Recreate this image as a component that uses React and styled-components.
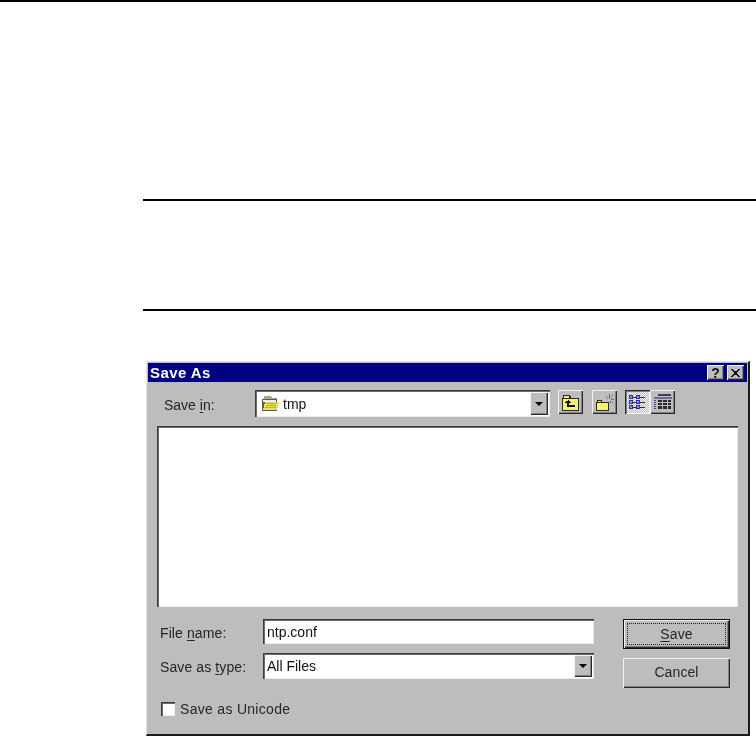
import React from 'react';
import styled, { createGlobalStyle, css } from 'styled-components';

const GlobalStyle = createGlobalStyle`
  html, body {
    margin: 0;
    padding: 0;
    background: #fff;
    overflow: hidden;
  }
`;

const Page = styled.div`
  width: 756px;
  height: 736px;
  overflow: hidden;
  display: flex;
  flex-direction: column;
  background: #fff;
`;

const TopRule = styled.div`
  height: 2px;
  background: #000;
  flex: none;
`;

const NoteBlock = styled.div`
  flex: none;
  height: 108px;
  margin: 197px 0 0 143px;
  border-top: 2px solid #000;
  border-bottom: 2px solid #000;
`;

const Dialog = styled.div`
  flex: none;
  box-sizing: border-box;
  width: 604px;
  height: 375px;
  margin: 50px 0 0 146px;
  padding: 1px;
  background: #bebcbe;
  border-top: 1px solid #e4e4e4;
  border-left: 1px solid #e4e4e4;
  border-right: 2px solid #1c1c1c;
  border-bottom: 2px solid #1c1c1c;
  font-family: "Liberation Sans", Arial, sans-serif;
  font-size: 14px;
  color: #262626;
  display: flex;
  flex-direction: column;
  filter: blur(0.35px);
`;

const TitleBar = styled.div`
  flex: none;
  height: 19px;
  background: #000080;
  display: flex;
  align-items: center;
  justify-content: space-between;
  padding: 0 3px 0 2px;
`;

const TitleText = styled.span`
  color: #fff;
  font-weight: 700;
  font-size: 15px;
  letter-spacing: 0.4px;
`;

const TitleButtons = styled.div`
  display: flex;
  gap: 3px;
`;

const raised = css`
  background: #bebcbe;
  box-shadow: inset 1px 1px #f2f2f2, inset -1px -1px #2a2a2a, inset -2px -2px #808080;
`;

const sunken = css`
  box-shadow: inset 1px 1px #3a3a3a, inset 2px 2px #6c6c6c, inset -1px -1px #ececec;
`;

const TitleButton = styled.div`
  ${raised}
  width: 17px;
  height: 15px;
  display: flex;
  align-items: center;
  justify-content: center;
  font-size: 14px;
  font-weight: 700;
  color: #111;
  line-height: 1;
`;

const Body = styled.div`
  flex: 1;
  display: flex;
  flex-direction: column;
  padding: 8px 9px 0 9px;
`;

const LookInRow = styled.div`
  height: 27px;
  display: flex;
  align-items: center;
  padding-left: 7px;
`;

const LookInLabel = styled.span`
  width: 91px;
  flex: none;
  padding-top: 2px;
`;

const Underlined = styled.span`
  text-decoration: underline;
  text-underline-offset: 2px;
`;

const Combo = styled.div`
  ${sunken}
  box-sizing: border-box;
  background: #fff;
  display: flex;
  align-items: center;
  width: ${p => p.$width}px;
  height: ${p => p.$height}px;
  padding: 2px 2px 2px 4px;
  flex: none;
`;

const ComboValue = styled.span`
  flex: 1;
  display: flex;
  align-items: center;
  gap: 4px;
  color: #111;
`;

const PathCombo = styled(Combo)`
  padding-left: 7px;
`;

const ArrowButton = styled.div`
  ${raised}
  align-self: stretch;
  width: 18px;
  display: flex;
  align-items: center;
  justify-content: center;
`;

const ArrowDown = styled.span`
  width: 0;
  height: 0;
  border-left: 4px solid transparent;
  border-right: 4px solid transparent;
  border-top: 4px solid #000;
`;

const Tools = styled.div`
  display: flex;
  align-items: flex-start;
  align-self: flex-start;
  margin-left: 8px;
`;

const ToolButton = styled.div`
  ${raised}
  width: 25px;
  height: 24px;
  display: flex;
  align-items: center;
  justify-content: center;
  margin-left: ${p => p.$gap || 0}px;
  ${p => p.$pressed && css`
    background: repeating-conic-gradient(#f2f2f2 0 25%, #bebcbe 0 50%) 0 0 / 2px 2px;
    box-shadow: inset 1px 1px #2a2a2a, inset 2px 2px #808080, inset -1px -1px #f2f2f2;
  `}
`;

const FileList = styled.div`
  ${sunken}
  flex: none;
  height: 181px;
  margin-top: 9px;
  background: #fff;
`;

const FormArea = styled.div`
  display: flex;
  margin: 12px 0 0 3px;
`;

const Fields = styled.div`
  display: flex;
  flex-direction: column;
  gap: 9px;
`;

const FieldRow = styled.div`
  display: flex;
  align-items: center;
`;

const FieldLabel = styled.span`
  width: 103px;
  flex: none;
  letter-spacing: 0.1px;
  padding-top: 2px;
`;

const Actions = styled.div`
  display: flex;
  flex-direction: column;
  gap: 9px;
  margin-left: 29px;
`;

const ActionButton = styled.div`
  ${raised}
  box-sizing: border-box;
  width: 107px;
  height: 30px;
  display: flex;
  align-items: center;
  justify-content: center;
  position: relative;
  letter-spacing: 0.1px;
  padding-bottom: ${p => p.$default ? 0 : 2}px;
  ${p => p.$default && css`
    border: 1px solid #111;
    &::after {
      content: '';
      position: absolute;
      inset: 3px;
      border: 1px dotted #222;
    }
  `}
`;

const UnicodeRow = styled.label`
  display: flex;
  align-items: center;
  gap: 5px;
  margin: 13px 0 0 4px;
  letter-spacing: 0.3px;
`;

const CheckBox = styled.span`
  ${sunken}
  width: 14px;
  height: 14px;
  background: #fff;
  flex: none;
`;

const CloseIcon = () => (
  <svg width="9" height="8" viewBox="0 0 9 8" shapeRendering="crispEdges">
    <path d="M0 0h2v1h1v1h3V1h1V0h2v1H8v1H7v1H6v2h1v1h1v1h1v1H7V7H6V6H3v1H2v1H0V7h1V6h1V5h1V3H2V2H1V1H0z" fill="#111" />
  </svg>
);

const FolderIcon = () => (
  <svg width="17" height="15" viewBox="0 0 17 15" shapeRendering="crispEdges">
    <path d="M2 0h7v1h1v1h5v2H2z" fill="#a8a890" />
    <path d="M0 3h15v12H0z" fill="#5c5c48" />
    <path d="M1 4h13v2H1z" fill="#f0f0e0" />
    <path d="M3 6h14l-2 8H1z" fill="#e8e060" />
    <path d="M4 7h11v1H4zM4 9h10v1H4zM3 11h11v1H3z" fill="#b8b040" />
  </svg>
);

const UpFolderIcon = () => (
  <svg width="19" height="17" viewBox="0 0 19 17" shapeRendering="crispEdges">
    <path d="M1 4h1V1h7v1h1v2h8v13H1z" fill="#2a2a2a" />
    <path d="M3 2h5v2H3z" fill="#f8f070" />
    <path d="M2 5h15v11H2z" fill="#f8f070" />
    <path d="M7 6h1v1h1v1h1v1H8v2h6v2H6V9H4V8h1V7h2z" fill="#111" />
  </svg>
);

const NewFolderIcon = () => (
  <svg width="18" height="17" viewBox="0 0 18 17" shapeRendering="crispEdges">
    <path d="M0 8h1V6h5v2h7v9H0z" fill="#2a2a2a" />
    <path d="M1 9h11v7H1z" fill="#f8f070" />
    <path d="M2 7h3v1H2z" fill="#f8f070" />
    <path d="M13 0h1v5h-1zM10 2h1v1h-1zM11 4h1v1h-1zM16 1h1v1h-1zM15 3h1v1h-1zM15 5h3v1h-3zM14 7h1v2h-1zM16 8h1v1h-1z" fill="#666" />
  </svg>
);

const ListViewIcon = () => (
  <svg width="17" height="15" viewBox="0 0 17 15" shapeRendering="crispEdges">
    <path d="M0 0h4v4H0zM7 0h4v4H7zM0 5h4v4H0zM7 5h4v4H7zM0 10h4v4H0zM7 10h4v4H7z" fill="#3030b0" />
    <path d="M1 1h2v2H1zM8 1h2v2H8zM1 6h2v2H1zM8 6h2v2H8zM1 11h2v2H1zM8 11h2v2H8z" fill="#9090d8" />
    <path d="M4 2h3v1H4zM11 2h5v1h-5zM4 7h3v1H4zM11 7h5v1h-5zM4 12h3v1H4zM11 12h5v1h-5z" fill="#333" />
  </svg>
);

const DetailViewIcon = () => (
  <svg width="18" height="16" viewBox="0 0 18 16" shapeRendering="crispEdges">
    <path d="M4 0h13v2H4z" fill="#444" />
    <path d="M0 3h18v2H0z" fill="#6a6aa8" />
    <path d="M0 6h2v1H0zM0 8h2v1H0zM0 10h2v1H0zM0 12h2v1H0zM0 14h2v1H0z" fill="#4a4a90" />
    <path d="M4 6h13v2H4zM4 9h13v2H4zM4 12h13v3H4z" fill="#2a2a2a" />
    <path d="M8 6h1v9H8zM13 6h1v9h-1z" fill="#bebcbe" />
  </svg>
);

const App = () => (
  <Page>
    <GlobalStyle />
    <TopRule />
    <NoteBlock />
    <Dialog>
      <TitleBar>
        <TitleText>Save As</TitleText>
        <TitleButtons>
          <TitleButton>?</TitleButton>
          <TitleButton><CloseIcon /></TitleButton>
        </TitleButtons>
      </TitleBar>
      <Body>
        <LookInRow>
          <LookInLabel>Save <Underlined>i</Underlined>n:</LookInLabel>
          <PathCombo $width={295} $height={27}>
            <ComboValue><FolderIcon />tmp</ComboValue>
            <ArrowButton><ArrowDown /></ArrowButton>
          </PathCombo>
          <Tools>
            <ToolButton><UpFolderIcon /></ToolButton>
            <ToolButton $gap={9}><NewFolderIcon /></ToolButton>
            <ToolButton $gap={8} $pressed><ListViewIcon /></ToolButton>
            <ToolButton><DetailViewIcon /></ToolButton>
          </Tools>
        </LookInRow>
        <FileList />
        <FormArea>
          <Fields>
            <FieldRow>
              <FieldLabel>File <Underlined>n</Underlined>ame:</FieldLabel>
              <Combo $width={331} $height={25}>
                <ComboValue>ntp.conf</ComboValue>
              </Combo>
            </FieldRow>
            <FieldRow>
              <FieldLabel>Save as <Underlined>t</Underlined>ype:</FieldLabel>
              <Combo $width={331} $height={26}>
                <ComboValue>All Files</ComboValue>
                <ArrowButton><ArrowDown /></ArrowButton>
              </Combo>
            </FieldRow>
          </Fields>
          <Actions>
            <ActionButton $default><span><Underlined>S</Underlined>ave</span></ActionButton>
            <ActionButton>Cancel</ActionButton>
          </Actions>
        </FormArea>
        <UnicodeRow>
          <CheckBox />
          Save as Unicode
        </UnicodeRow>
      </Body>
    </Dialog>
  </Page>
);

export default App;
